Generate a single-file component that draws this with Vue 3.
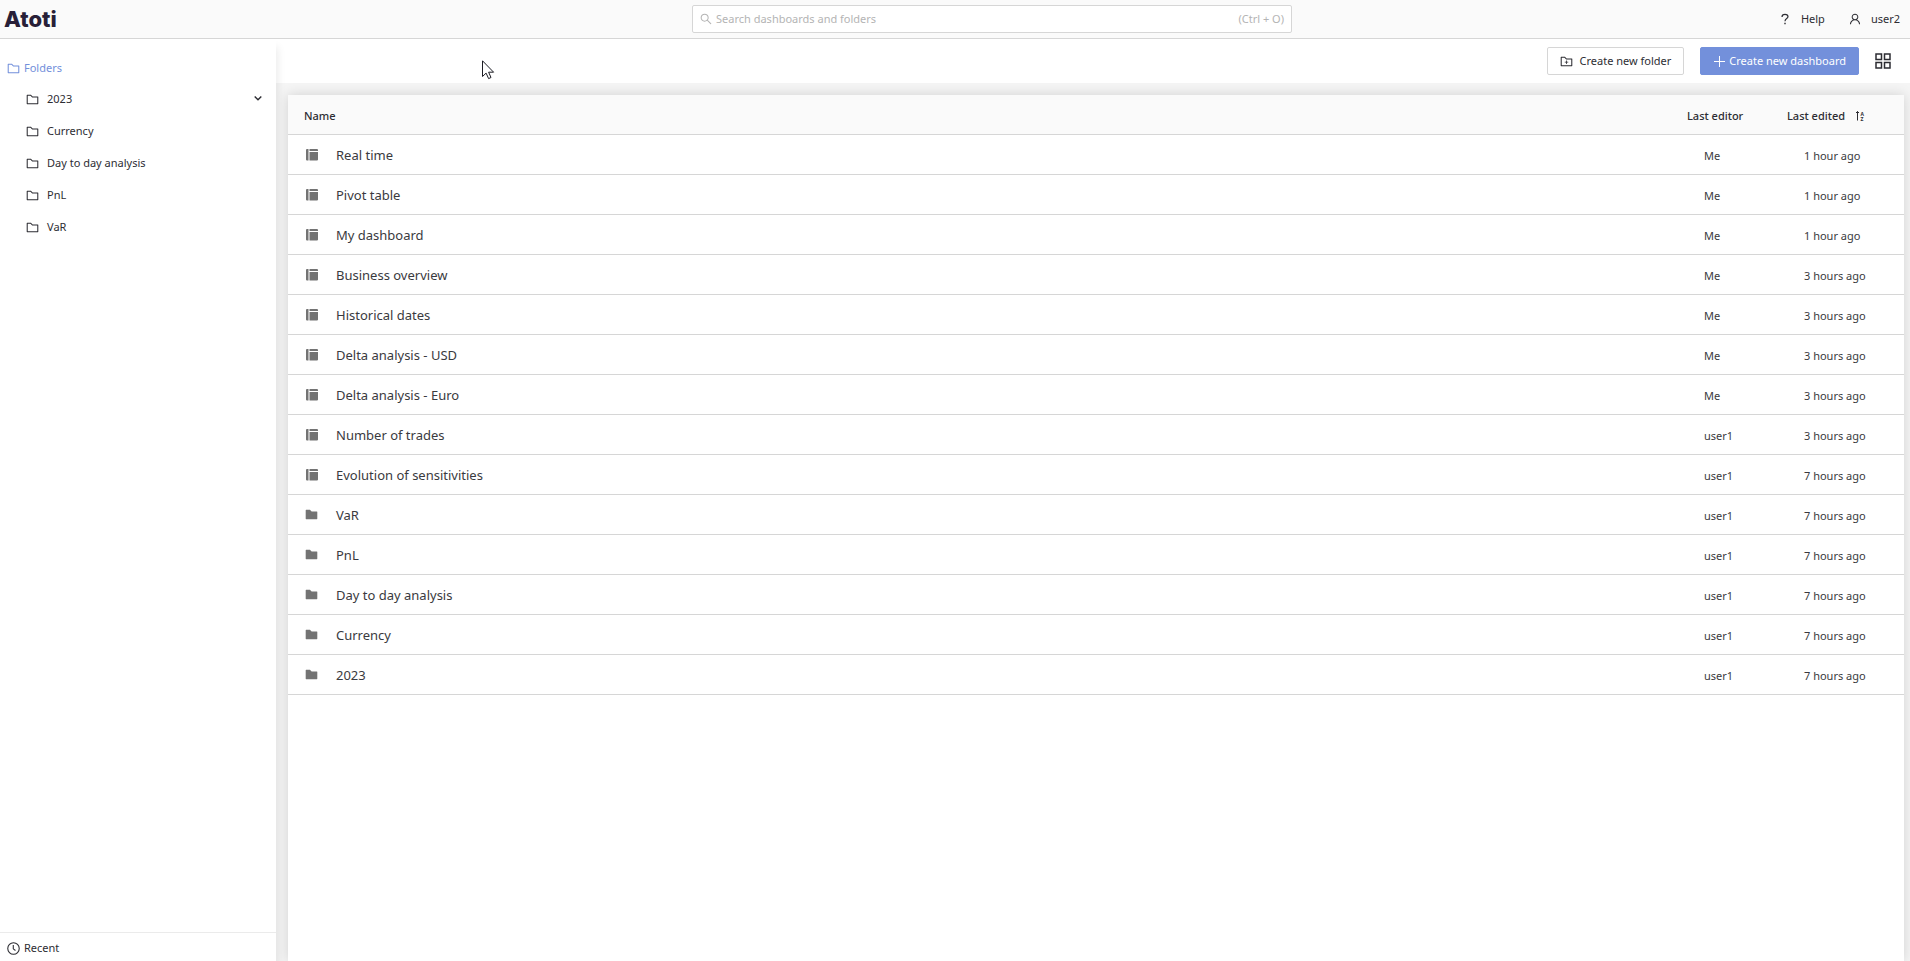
<script setup>
const folderPath =
  'M880 298.4H521L403.7 186.2a8.15 8.15 0 00-5.5-2.2H144c-17.7 0-32 14.3-32 32v592c0 17.7 14.3 32 32 32h736c17.7 0 32-14.3 32-32V330.4c0-17.7-14.3-32-32-32z'
const folderInner = 'M840 768H184V256h188.5l119.6 114.4H840V768z'

const folders = ['2023', 'Currency', 'Day to day analysis', 'PnL', 'VaR']

const rows = [
  { name: 'Real time', type: 'dashboard', editor: 'Me', edited: '1 hour ago' },
  { name: 'Pivot table', type: 'dashboard', editor: 'Me', edited: '1 hour ago' },
  { name: 'My dashboard', type: 'dashboard', editor: 'Me', edited: '1 hour ago' },
  { name: 'Business overview', type: 'dashboard', editor: 'Me', edited: '3 hours ago' },
  { name: 'Historical dates', type: 'dashboard', editor: 'Me', edited: '3 hours ago' },
  { name: 'Delta analysis - USD', type: 'dashboard', editor: 'Me', edited: '3 hours ago' },
  { name: 'Delta analysis - Euro', type: 'dashboard', editor: 'Me', edited: '3 hours ago' },
  { name: 'Number of trades', type: 'dashboard', editor: 'user1', edited: '3 hours ago' },
  { name: 'Evolution of sensitivities', type: 'dashboard', editor: 'user1', edited: '7 hours ago' },
  { name: 'VaR', type: 'folder', editor: 'user1', edited: '7 hours ago' },
  { name: 'PnL', type: 'folder', editor: 'user1', edited: '7 hours ago' },
  { name: 'Day to day analysis', type: 'folder', editor: 'user1', edited: '7 hours ago' },
  { name: 'Currency', type: 'folder', editor: 'user1', edited: '7 hours ago' },
  { name: '2023', type: 'folder', editor: 'user1', edited: '7 hours ago' },
]
</script>

<template>
  <div class="page">
    <header class="topbar">
      <a class="logo" href="#">Atoti</a>
      <div class="search">
        <svg class="icon12" viewBox="64 64 896 896" aria-hidden="true">
          <path d="M909.6 854.5L649.9 594.8C690.2 542.7 712 479 712 412c0-80.2-31.3-155.4-87.9-212.1-56.6-56.7-132-87.9-212.1-87.9s-155.5 31.3-212.1 87.9C143.2 256.5 112 331.8 112 412c0 80.1 31.3 155.5 87.9 212.1C256.5 680.8 331.8 712 412 712c67 0 130.6-21.8 182.7-62l259.7 259.6a8.2 8.2 0 0011.6 0l43.6-43.5a8.2 8.2 0 000-11.6zM570.4 570.4C528 612.7 471.8 636 412 636s-116-23.3-158.4-65.6C211.3 528 188 471.8 188 412s23.3-116.1 65.6-158.4C296 211.3 352.2 188 412 188s116.1 23.2 158.4 65.6S636 352.2 636 412s-23.3 116.1-65.6 158.4z" />
        </svg>
        <input type="text" aria-label="Search dashboards and folders" placeholder="Search dashboards and folders" />
        <span>(Ctrl + O)</span>
      </div>
      <nav class="account">
        <button type="button">
          <svg class="icon12" viewBox="0 0 12 12" fill="none" stroke="currentColor" stroke-width="1.2" aria-hidden="true">
            <path d="M3 4C3 2.200 4.200 1.300 6 1.300s3 1 3 2.500C9 5.500 6 5.700 6 8.200" />
            <path d="M6 9.800v1.400" stroke-width="1.4" />
          </svg>
          Help
        </button>
        <button type="button">
          <svg class="icon12" viewBox="64 64 896 896" aria-hidden="true">
            <path d="M858.5 763.6a374 374 0 00-80.6-119.5 375.63 375.63 0 00-119.5-80.6c-.4-.2-.8-.3-1.2-.5C719.5 518 760 444.7 760 362c0-137-111-248-248-248S264 225 264 362c0 82.700 40.500 156 102.800 201.100-.4.2-.8.3-1.200.5-44.800 18.900-85 46-119.500 80.600a375.63 375.63 0 00-80.600 119.500A371.700 371.700 0 00136 901.800a8 8 0 008 8.200h60c4.400 0 7.900-3.500 8-7.800 2-77.200 33-149.500 87.800-204.300 56.700-56.700 132-87.900 212.200-87.900s155.500 31.200 212.200 87.900C779 752.700 810 825 812 902.200c.1 4.400 3.600 7.800 8 7.800h60a8 8 0 008-8.200c-1-47.800-10.900-94.300-29.500-138.200zM512 534c-45.900 0-89.100-17.900-121.600-50.400S340 407.900 340 362c0-45.900 17.900-89.100 50.400-121.600S466.100 190 512 190s89.100 17.900 121.600 50.400S684 316.100 684 362c0 45.900-17.900 89.100-50.400 121.600S557.900 534 512 534z" />
          </svg>
          user2
        </button>
      </nav>
    </header>

    <div class="body">
      <aside class="sidebar">
        <nav>
          <a class="root" href="#">
            <svg class="icon13" viewBox="64 64 896 896" aria-hidden="true"><path fill-rule="evenodd" :d="folderPath + folderInner" /></svg>
            Folders
          </a>
          <ul>
            <li v-for="(folder, i) in folders" :key="folder">
              <a href="#">
                <svg class="icon13" viewBox="64 64 896 896" aria-hidden="true"><path fill-rule="evenodd" :d="folderPath + folderInner" /></svg>
                {{ folder }}
              </a>
              <button v-if="i === 0" type="button" class="expand" aria-label="Expand 2023">
                <svg viewBox="0 0 8 8" fill="none" stroke="currentColor" stroke-width="1.4" aria-hidden="true"><path d="M.7 1.500L4 4.800 7.300 1.500" /></svg>
              </button>
            </li>
          </ul>
        </nav>
        <a class="recent" href="#">
          <svg class="icon13" viewBox="1 1 12 12" fill="none" stroke="currentColor" aria-hidden="true">
            <circle cx="7" cy="7" r="5.300" />
            <path d="M6.800 3.800v3.500l2 1.500" />
          </svg>
          Recent
        </a>
      </aside>

      <main class="main">
        <div class="toolbar">
          <button type="button" class="btn">
            <svg class="icon13" viewBox="64 64 896 896" aria-hidden="true">
              <path fill-rule="evenodd" :d="folderPath + folderInner" />
              <path d="M484 443.100V528h-84.500c-4.100 0-7.500 3.100-7.500 7v42c0 3.800 3.400 7 7.500 7H484v84.900c0 3.900 3.200 7.100 7 7.100h42c3.900 0 7-3.200 7-7.100V584h84.500c4.100 0 7.500-3.200 7.500-7v-42c0-3.900-3.400-7-7.500-7H540v-84.900c0-3.900-3.100-7.100-7-7.100h-42c-3.800 0-7 3.200-7 7.100z" />
            </svg>
            Create new folder
          </button>
          <button type="button" class="btn primary">
            <svg class="icon12" viewBox="0 0 12 12" stroke="currentColor" aria-hidden="true"><path d="M6.500 1v11M1 6.500h11" /></svg>
            Create new dashboard
          </button>
          <button type="button" class="grid-toggle" aria-label="Grid view">
            <svg viewBox="0 0 16 16" fill="none" stroke="currentColor" stroke-width="1.500" aria-hidden="true">
              <path d="M1 1h5.500v5.500H1zM9.500 1H15v5.500H9.500zM1 9.500h5.500V15H1zM9.500 9.500H15V15H9.500z" />
            </svg>
          </button>
        </div>

        <div class="content">
          <div class="card">
            <table>
              <colgroup>
                <col />
                <col class="col-editor" />
                <col class="col-edited" />
              </colgroup>
              <thead>
                <tr>
                  <th scope="col">Name</th>
                  <th scope="col">Last editor</th>
                  <th scope="col">
                    <div class="cell sort">
                      Last edited
                      <svg class="sort-icon" viewBox="0 0 10 12" aria-hidden="true">
                        <path d="M2.500 10.500V1.500M1 3l1.500-1.500L4 3" fill="none" stroke="currentColor" />
                        <text x="5.500" y="5.500">A</text>
                        <text x="5.500" y="10.500">Z</text>
                      </svg>
                    </div>
                  </th>
                </tr>
              </thead>
              <tbody>
                <tr v-for="row in rows" :key="row.name">
                  <td>
                    <div class="cell name">
                      <svg v-if="row.type === 'folder'" class="icon13" viewBox="64 64 896 896" aria-hidden="true"><path :d="folderPath" /></svg>
                      <svg v-else class="icon13" viewBox="0 0 13 13" aria-hidden="true">
                        <path d="M1 2a1 1 0 011-1h1.500v11.500H2a1 1 0 01-1-1zM4.500 1H12a1 1 0 011 1v1H4.500zM4.500 4H13v7.500a1 1 0 01-1 1H4.500z" />
                      </svg>
                      {{ row.name }}
                    </div>
                  </td>
                  <td>{{ row.editor }}</td>
                  <td>{{ row.edited }}</td>
                </tr>
              </tbody>
            </table>
          </div>
        </div>
      </main>
    </div>

    <svg class="cursor" viewBox="0 0 13 20" aria-hidden="true">
      <path d="M.5.800v15.700l3.600-3.400 2.500 5.500 2.400-1.100-2.400-5.300h5z" fill="#fff" stroke="#1c1c24" />
    </svg>
  </div>
</template>

<style>
body {
  margin: 0;
}
</style>

<style scoped>
.page {
  position: relative;
  display: flex;
  flex-direction: column;
  min-height: 100vh;
  background: #fff;
  color: #2d2d33;
  font-family: "Noto Sans", "Open Sans", sans-serif;
  font-size: 11px;
  line-height: 20px;
}

a {
  color: inherit;
  text-decoration: none;
}

button {
  font: inherit;
  color: inherit;
  background: none;
  border: 0;
  padding: 0;
}

svg {
  display: block;
  flex: none;
  fill: currentColor;
}

svg[fill="none"] {
  fill: none;
}

.icon12 {
  width: 12px;
  height: 12px;
}

.icon13 {
  width: 13px;
  height: 13px;
}

.topbar {
  display: grid;
  grid-template-columns: 74px 1fr 600px 1fr;
  align-items: center;
  height: 38px;
  background: #fafafa;
  border-bottom: 1px solid #d6d6d6;
}

.logo {
  padding-left: 4px;
  color: #281f38;
  font-family: Inter, sans-serif;
  font-size: 22px;
  font-weight: 800;
}

.search {
  grid-column: 3;
  display: flex;
  align-items: center;
  gap: 4px;
  box-sizing: border-box;
  height: 28px;
  padding: 0 7px;
  background: #fff;
  border: 1px solid #d6d6d6;
  border-radius: 2px;
  color: #b4b4b4;
}

.search input {
  flex: 1;
  min-width: 0;
  padding: 0;
  border: 0;
  outline: 0;
  background: none;
  font: inherit;
}

.search input::placeholder {
  color: #b4b4b4;
  opacity: 1;
}

.account {
  display: flex;
  justify-content: flex-end;
  gap: 24px;
  padding-right: 10px;
}

.account button {
  display: flex;
  align-items: center;
  gap: 10px;
}

.body {
  flex: 1;
  display: flex;
}

.sidebar {
  z-index: 1;
  flex: none;
  display: flex;
  flex-direction: column;
  justify-content: space-between;
  width: 276px;
  background: #fff;
  box-shadow: 2px 8px 8px rgba(0, 0, 0, 0.08);
}

.sidebar nav {
  padding-top: 14px;
}

.root,
.recent {
  display: flex;
  align-items: center;
  gap: 4px;
  height: 30px;
  padding-left: 7px;
}

.root {
  color: #7390db;
}

.recent {
  height: 26px;
  padding-top: 2px;
  border-top: 1px solid #ebebeb;
}

.sidebar ul {
  margin: 0;
  padding: 0 14px 0 26px;
  list-style: none;
}

.sidebar li {
  display: flex;
  align-items: center;
  justify-content: space-between;
  height: 32px;
}

.sidebar li a {
  display: flex;
  align-items: center;
  gap: 8px;
}

.expand svg {
  width: 8px;
  height: 8px;
}

.main {
  flex: 1;
  display: flex;
  flex-direction: column;
  min-width: 0;
}

.toolbar {
  display: flex;
  align-items: center;
  justify-content: flex-end;
  gap: 16px;
  height: 44px;
  padding-right: 19px;
}

.btn {
  display: flex;
  align-items: center;
  gap: 7px;
  height: 28px;
  padding: 0 12px;
  background: #fff;
  border: 1px solid #d6d6d6;
  border-radius: 2px;
}

.primary {
  gap: 4px;
  background: #7390db;
  border-color: #7390db;
  color: #fff;
}

.grid-toggle svg {
  width: 16px;
  height: 16px;
}

.content {
  flex: 1;
  display: flex;
  padding: 12px 6px 0 12px;
  background: #f5f5f5;
  overflow: hidden;
}

.card {
  flex: 1;
  background: #fff;
  box-shadow: 0 0 12px rgba(0, 0, 0, 0.15);
}

table {
  width: 100%;
  border-collapse: separate;
  border-spacing: 0;
  table-layout: fixed;
}

.col-editor {
  width: 100px;
}

.col-edited {
  width: 133px;
}

th,
td {
  box-sizing: border-box;
  height: 40px;
  padding: 0 0 0 16px;
  border-bottom: 1px solid #d6d6d6;
  text-align: left;
}

th {
  padding-top: 2px;
  background: #fafafa;
  font-weight: 500;
}

td {
  color: #3a3a40;
}

td + td {
  padding-left: 33px;
  padding-top: 2px;
}

.cell {
  display: flex;
  align-items: center;
}

.sort {
  gap: 10px;
}

.sort-icon {
  width: 10px;
  height: 12px;
  font-size: 5px;
  font-weight: 700;
}

.name {
  gap: 18px;
  padding-left: 1px;
  font-size: 13px;
}

.name svg {
  color: #737373;
}

.cursor {
  position: absolute;
  left: 482px;
  top: 60px;
  width: 13px;
  height: 20px;
}
</style>
